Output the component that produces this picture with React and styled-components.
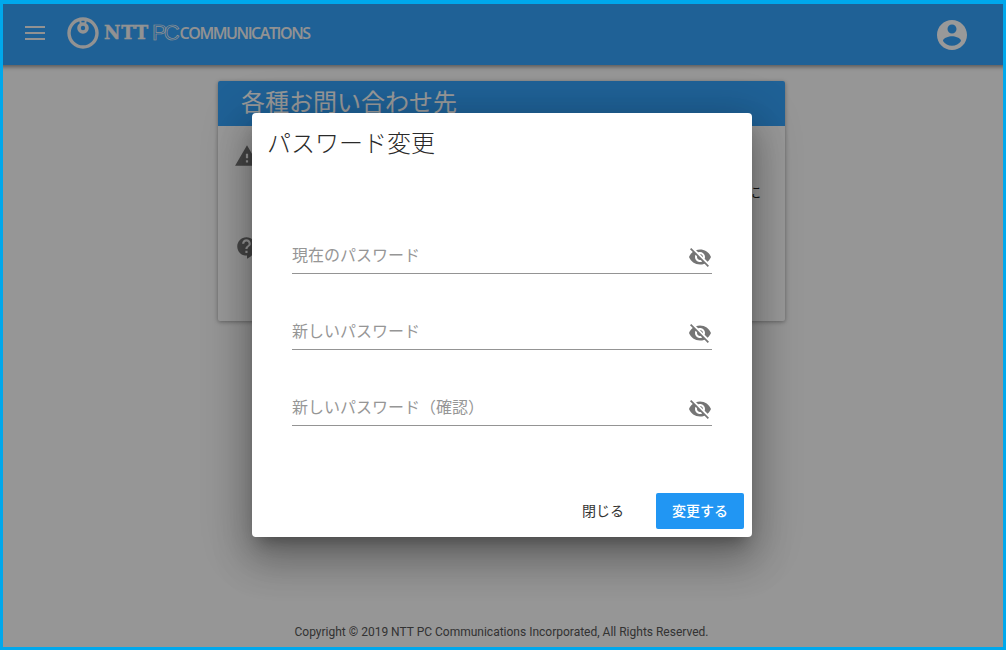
import styled, { createGlobalStyle } from 'styled-components';

const GlobalStyle = createGlobalStyle`
  html, body {
    margin: 0;
    padding: 0;
    height: 100%;
    font-family: Roboto, "Noto Sans CJK JP", sans-serif;
  }
`;

const Frame = styled.div`
  position: relative;
  box-sizing: border-box;
  width: 1006px;
  height: 650px;
  display: flex;
  flex-direction: column;
  background-color: #fafafa;
  overflow: hidden;
`;
const FrameBorder = styled.div`
  position: absolute;
  inset: 0;
  border: 3px solid #00a8ec;
  border-top-width: 4px;
  pointer-events: none;
  z-index: 3;
`;
const Header = styled.header`
  flex: none;
  height: 65px;
  padding: 4px 36px 0 25px;
  box-sizing: border-box;
  display: flex;
  align-items: center;
  justify-content: space-between;
  background-color: #35a2fa;
  box-shadow: 0 2px 4px rgba(0, 0, 0, 0.4);
`;
const HeaderLeft = styled.div`
  display: flex;
  align-items: center;
  gap: 22px;
  margin-top: -4px;
`;
const Logo = styled.div`
  display: flex;
  align-items: center;
  color: #f4f4f4;
`;
const LogoNtt = styled.span`
  margin-left: 5px;
  font-family: "DejaVu Serif", serif;
  font-weight: 700;
  font-size: 18px;
  letter-spacing: 0.8px;
  -webkit-text-stroke: 0.4px #f4f4f4;
`;
const LogoPc = styled.span`
  margin-left: 3px;
  font-family: "Liberation Sans", sans-serif;
  font-size: 22px;
  letter-spacing: -3px;
  color: transparent;
  -webkit-text-stroke: 0.7px #f4f4f4;
`;
const LogoName = styled.span`
  margin-left: 3px;
  font-family: "Open Sans", sans-serif;
  font-weight: 600;
  font-size: 16px;
  letter-spacing: -1.43px;
`;
const Main = styled.main`
  flex: 1;
  display: flex;
  flex-direction: column;
  align-items: center;
  padding-top: 16px;
  padding-right: 3px;
`;
const Card = styled.section`
  width: 567px;
  height: 240px;
  border-radius: 2px;
  overflow: hidden;
  background-color: #fff;
  box-shadow: 0 1px 4px rgba(0, 0, 0, 0.35);
`;
const CardHead = styled.h2`
  margin: 0;
  height: 45px;
  padding: 7px 23px 0;
  box-sizing: border-box;
  font-size: 24px;
  line-height: 30px;
  font-weight: 400;
  color: #fff;
  background-color: #35a2fa;
`;
const CardRow = styled.div`
  display: flex;
  align-items: flex-start;
  gap: 8px;
  padding: ${(props) => props.$pad};
  font-size: 14px;
  line-height: 24px;
  color: #222;
`;
const RowIcon = styled.svg`
  flex: none;
  width: 26px;
  height: 26px;
  fill: #757575;
`;
const RowText = styled.div`
  flex: 1;
  text-align: right;
  padding-right: 24px;
  padding-top: 37px;
`;
const Footer = styled.footer`
  flex: none;
  height: 26px;
  padding-right: 3px;
  text-align: center;
  font-size: 12px;
  line-height: 16px;
  color: #555;
`;
const Overlay = styled.div`
  position: absolute;
  inset: 0;
  display: flex;
  align-items: center;
  justify-content: center;
  padding-right: 2px;
  background-color: rgba(0, 0, 0, 0.4);
  z-index: 2;
`;
const Dialog = styled.div`
  width: 500px;
  height: 424px;
  display: flex;
  flex-direction: column;
  border-radius: 4px;
  background-color: #fff;
  box-shadow: 0 11px 15px -7px rgba(0, 0, 0, 0.3), 0 24px 38px 3px rgba(0, 0, 0, 0.2),
    0 9px 46px 8px rgba(0, 0, 0, 0.18);
`;
const DialogTitle = styled.h1`
  margin: 0;
  padding: 15px 15px 0;
  font-size: 24px;
  line-height: 32px;
  font-weight: 300;
  color: #2a2a2a;
`;
const Fields = styled.div`
  flex: 1;
  display: flex;
  flex-direction: column;
  gap: 43px;
  padding: 81px 40px 0;
`;
const Field = styled.div`
  height: 32px;
  display: flex;
  align-items: center;
  justify-content: space-between;
  border-bottom: 1px solid #949494;
`;
const FieldLabel = styled.span`
  margin-bottom: 6px;
  font-size: 16px;
  color: #969696;
`;
const EyeIcon = styled.svg`
  flex: none;
  width: 24px;
  height: 24px;
  fill: #757575;
`;
const Actions = styled.div`
  display: flex;
  justify-content: flex-end;
  align-items: center;
  gap: 16px;
  padding: 0 8px 8px;
`;
const Button = styled.button`
  height: 36px;
  padding: 0 16px 2px;
  border: none;
  border-radius: 2px;
  font-family: inherit;
  font-size: 14px;
  font-weight: ${(props) => (props.$primary ? 500 : 400)};
  color: ${(props) => (props.$primary ? '#fff' : '#333')};
  background-color: ${(props) => (props.$primary ? '#2196f3' : 'transparent')};
`;

const EyeOff = () => (
  <EyeIcon viewBox="0 0 24 24">
    <path d="M12 7c2.76 0 5 2.24 5 5 0 .65-.13 1.26-.36 1.83l2.92 2.92c1.51-1.26 2.7-2.89 3.43-4.75-1.73-4.39-6-7.5-11-7.5-1.4 0-2.74.25-3.98.7l2.16 2.16C10.74 7.13 11.35 7 12 7zM2 4.27l2.28 2.28.46.46C3.08 8.3 1.78 10.02 1 12c1.73 4.39 6 7.5 11 7.5 1.55 0 3.03-.3 4.38-.84l.42.42L19.73 22 21 20.73 3.27 3 2 4.27zM7.53 9.8l1.55 1.55c-.05.21-.08.43-.08.65 0 1.66 1.34 3 3 3 .22 0 .44-.03.65-.08l1.55 1.55c-.67.33-1.41.53-2.2.53-2.76 0-5-2.24-5-5 0-.79.2-1.53.53-2.2zm4.31-.78l3.15 3.15.02-.16c0-1.66-1.34-3-3-3l-.17.01z" />
  </EyeIcon>
);

const App = () => {
  return (
    <Frame>
      <GlobalStyle />
      <Header>
        <HeaderLeft>
          <svg width="20" height="14" viewBox="0 0 20 14" fill="#f4f4f4">
            <rect y="0" width="20" height="2" />
            <rect y="6" width="20" height="2" />
            <rect y="12" width="20" height="2" />
          </svg>
          <Logo>
            <svg width="32" height="32" viewBox="0 0 32 32" fill="none" stroke="#f4f4f4">
              <circle cx="16" cy="16" r="14" strokeWidth="3.400" />
              <circle cx="16" cy="11" r="4" strokeWidth="3.600" />
              <path d="M13 3l1 4M19 3l-1 4" strokeWidth="2" />
            </svg>
            <LogoNtt>NTT</LogoNtt>
            <LogoPc>PC</LogoPc>
            <LogoName>COMMUNICATIONS</LogoName>
          </Logo>
        </HeaderLeft>
        <svg width="36" height="36" viewBox="0 0 24 24" fill="#fff">
          <path d="M12 2C6.48 2 2 6.480 2 12s4.480 10 10 10 10-4.480 10-10S17.520 2 12 2zm0 3c1.660 0 3 1.340 3 3s-1.340 3-3 3-3-1.340-3-3 1.340-3 3-3zm0 14.200c-2.500 0-4.710-1.280-6-3.220.03-1.990 4-3.080 6-3.080 1.990 0 5.970 1.090 6 3.080-1.290 1.940-3.500 3.220-6 3.220z" />
        </svg>
      </Header>
      <Main>
        <Card>
          <CardHead>各種お問い合わせ先</CardHead>
          <CardRow $pad="17px 0 0 16px">
            <RowIcon viewBox="0 0 24 24">
              <path d="M1 21h22L12 2 1 21zm12-3h-2v-2h2v2zm0-4h-2v-4h2v4z" />
            </RowIcon>
            <RowText>に</RowText>
          </CardRow>
          <CardRow $pad="31px 0 0 16px">
            <RowIcon viewBox="0 0 24 24">
              <path d="M11.500 2C6.810 2 3 5.810 3 10.500S6.810 19 11.500 19h.5v3c4.860-2.340 8-7 8-11.500C20 5.810 16.190 2 11.500 2zm1 14.500h-2v-2h2v2zm0-3.500h-2c0-3.250 3-3 3-5 0-1.100-.9-2-2-2s-2 .9-2 2h-2c0-2.210 1.790-4 4-4s4 1.790 4 4c0 2.500-3 2.750-3 5z" />
            </RowIcon>
          </CardRow>
        </Card>
      </Main>
      <Footer>Copyright © 2019 NTT PC Communications Incorporated, All Rights Reserved.</Footer>
      <Overlay>
        <Dialog>
          <DialogTitle>パスワード変更</DialogTitle>
          <Fields>
            <Field>
              <FieldLabel>現在のパスワード</FieldLabel>
              <EyeOff />
            </Field>
            <Field>
              <FieldLabel>新しいパスワード</FieldLabel>
              <EyeOff />
            </Field>
            <Field>
              <FieldLabel>新しいパスワード（確認）</FieldLabel>
              <EyeOff />
            </Field>
          </Fields>
          <Actions>
            <Button>閉じる</Button>
            <Button $primary>変更する</Button>
          </Actions>
        </Dialog>
      </Overlay>
      <FrameBorder />
    </Frame>
  );
};

export default App;
